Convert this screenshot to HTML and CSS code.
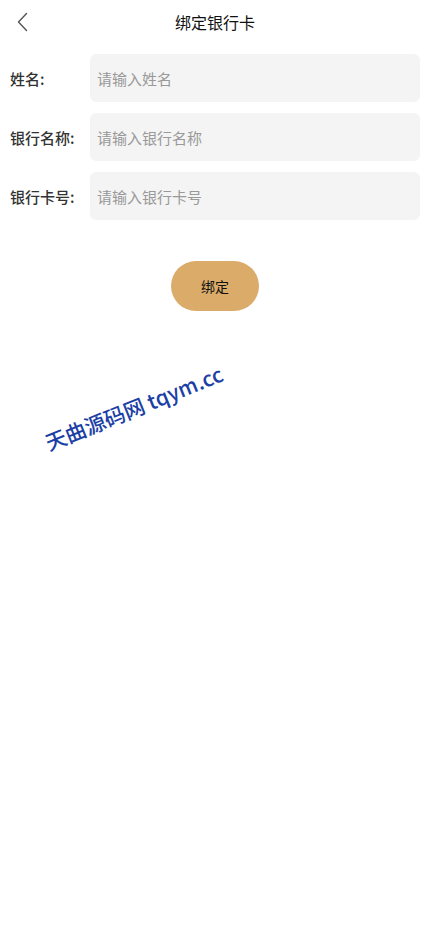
FILE: index.html
```html
<!DOCTYPE html>
<html lang="zh">
<head>
<meta charset="utf-8">
<meta name="viewport" content="width=device-width, initial-scale=1">
<title>绑定银行卡</title>
<link rel="stylesheet" href="styles.css">
</head>
<body>
<div class="page">
  <header class="nav">
    <span class="back">
      <svg width="12" height="20" viewBox="0 0 12 20"><path d="M9.5 1.5 L1.5 10 L9.5 18.5" fill="none" stroke="#555" stroke-width="1.4" stroke-linecap="round" stroke-linejoin="round"/></svg>
    </span>
    <h1 class="title">绑定银行卡</h1>
  </header>
  <form class="form">
    <div class="row">
      <label class="label">姓名:</label>
      <div class="field"><input class="input" placeholder="请输入姓名"></div>
    </div>
    <div class="row">
      <label class="label">银行名称:</label>
      <div class="field"><input class="input" placeholder="请输入银行名称"></div>
    </div>
    <div class="row">
      <label class="label">银行卡号:</label>
      <div class="field"><input class="input" placeholder="请输入银行卡号"></div>
    </div>
    <div class="actions">
      <button type="button" class="btn">绑定</button>
    </div>
  </form>
  <div class="watermark">天曲源码网 tqym.cc</div>
</div>
</body>
</html>
```
FILE: styles.css
```css
* { box-sizing: border-box; }
html, body { margin: 0; padding: 0; background: #fff; }
body {
  font-family: "Noto Sans CJK SC", "Noto Sans", sans-serif;
  color: #333;
}
.page { position: relative; width: 430px; min-height: 932px; }
.nav {
  position: relative;
  height: 44px;
  display: flex;
  align-items: center;
  justify-content: center;
}
.back {
  position: absolute;
  left: 17px;
  top: 12px;
  display: flex;
}
.title {
  margin: 0;
  font-size: 16px;
  font-weight: 400;
  color: #111;
  line-height: 44px;
}
.form {
  padding: 10px 10px 0 10px;
  display: flex;
  flex-direction: column;
  gap: 11px;
}
.row {
  display: flex;
  align-items: center;
  height: 48px;
}
.label {
  width: 80px;
  font-size: 15px;
  font-weight: 500;
  color: #333;
}
.field { flex: 1; height: 48px; }
.input {
  width: 100%;
  height: 48px;
  border: none;
  outline: none;
  background: #f4f4f4;
  border-radius: 6px;
  padding: 0 7px;
  font-family: "Noto Sans CJK SC", "Noto Sans", sans-serif;
  font-size: 15px;
  color: #333;
}
.input::placeholder { color: #999; }
.actions {
  display: flex;
  justify-content: center;
  padding-top: 30px;
}
.btn {
  width: 88px;
  height: 50px;
  border: none;
  border-radius: 25px;
  background: #dbab6a;
  color: #111;
  font-family: "Noto Sans CJK SC", "Noto Sans", sans-serif;
  font-size: 14px;
}
.watermark {
  position: absolute;
  left: 46px;
  top: 428px;
  transform: rotate(-22deg);
  transform-origin: left center;
  font-family: "Noto Sans CJK SC", "Noto Sans", sans-serif;
  font-size: 21px;
  font-weight: 500;
  color: #1c3fa6;
  white-space: nowrap;
}
```
